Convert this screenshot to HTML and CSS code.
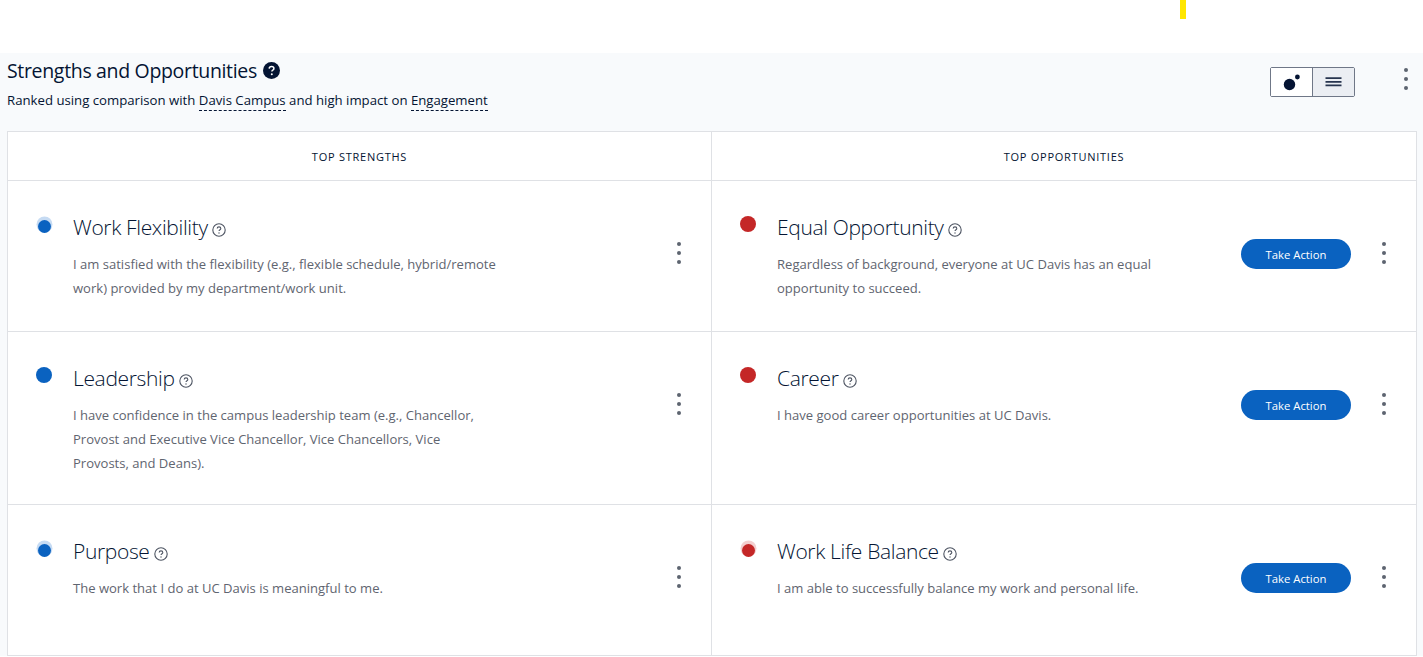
FILE: index.html
```html
<!DOCTYPE html>
<html lang="en">
<head>
<meta charset="utf-8">
<title>Strengths and Opportunities</title>
<link rel="stylesheet" href="styles.css">
</head>
<body>
<div class="marker"></div>
<main class="panel">
  <header class="panel-head">
    <div class="head-text">
      <h1 class="panel-title">Strengths and Opportunities
        <svg class="help-solid" viewBox="0 0 17 17" aria-hidden="true"><circle cx="8.5" cy="8.5" r="8.5" fill="#041433"/><path d="M6.2 6.6c.1-1.4 1-2.1 2.4-2.1s2.3.8 2.3 1.9c0 .9-.5 1.4-1.2 1.8-.6.4-.8.7-.8 1.4" fill="none" stroke="#fff" stroke-width="1.5"/><circle cx="8.8" cy="12.3" r="1" fill="#fff"/></svg>
      </h1>
      <p class="panel-sub">Ranked using comparison with <span class="dashed">Davis Campus</span> and high impact on <span class="dashed">Engagement</span></p>
    </div>
    <div class="toggle">
      <button class="toggle-btn"><svg width="22" height="22" viewBox="0 0 22 22" aria-hidden="true"><circle cx="8.5" cy="13.5" r="5.7" fill="#041433"/><circle cx="16.4" cy="6" r="2.4" fill="#041433"/></svg></button>
      <button class="toggle-btn is-on"><svg width="18" height="10" viewBox="0 0 18 10" aria-hidden="true"><path d="M0.5 1.2h16M0.5 4.8h16M0.5 8.4h16" stroke="#27344f" stroke-width="1.7"/></svg></button>
    </div>
    <button class="kebab kebab-head"><i></i><i></i><i></i></button>
  </header>

  <section class="board">
    <div class="col-head">TOP STRENGTHS</div>
    <div class="col-head">TOP OPPORTUNITIES</div>

    <article class="cell">
      <span class="dot blue halo"></span>
      <div class="cell-body">
        <h2 class="cell-title">Work Flexibility <svg class="help" viewBox="0 0 14 14" aria-hidden="true"><circle cx="7" cy="7" r="6.2"/><path d="M5.2 5.6c0-1.1.8-1.7 1.8-1.7s1.8.6 1.8 1.5c0 1.3-1.8 1.3-1.8 2.7"/><circle class="pt" cx="7" cy="10" r=".7"/></svg></h2>
        <p class="cell-text">I am satisfied with the flexibility (e.g., flexible schedule, hybrid/remote work) provided by my department/work unit.</p>
      </div>
      <button class="kebab"><i></i><i></i><i></i></button>
    </article>
    <article class="cell">
      <span class="dot red"></span>
      <div class="cell-body">
        <h2 class="cell-title">Equal Opportunity <svg class="help" viewBox="0 0 14 14" aria-hidden="true"><circle cx="7" cy="7" r="6.2"/><path d="M5.2 5.6c0-1.1.8-1.7 1.8-1.7s1.8.6 1.8 1.5c0 1.3-1.8 1.3-1.8 2.7"/><circle class="pt" cx="7" cy="10" r=".7"/></svg></h2>
        <p class="cell-text">Regardless of background, everyone at UC Davis has an equal opportunity to succeed.</p>
      </div>
      <button class="action">Take Action</button>
      <button class="kebab"><i></i><i></i><i></i></button>
    </article>

    <article class="cell tall">
      <span class="dot blue"></span>
      <div class="cell-body">
        <h2 class="cell-title">Leadership <svg class="help" viewBox="0 0 14 14" aria-hidden="true"><circle cx="7" cy="7" r="6.2"/><path d="M5.2 5.6c0-1.1.8-1.7 1.8-1.7s1.8.6 1.8 1.5c0 1.3-1.8 1.3-1.8 2.7"/><circle class="pt" cx="7" cy="10" r=".7"/></svg></h2>
        <p class="cell-text">I have confidence in the campus leadership team (e.g., Chancellor, Provost and Executive Vice Chancellor, Vice Chancellors, Vice Provosts, and Deans).</p>
      </div>
      <button class="kebab"><i></i><i></i><i></i></button>
    </article>
    <article class="cell tall">
      <span class="dot red"></span>
      <div class="cell-body">
        <h2 class="cell-title">Career <svg class="help" viewBox="0 0 14 14" aria-hidden="true"><circle cx="7" cy="7" r="6.2"/><path d="M5.2 5.6c0-1.1.8-1.7 1.8-1.7s1.8.6 1.8 1.5c0 1.3-1.8 1.3-1.8 2.7"/><circle class="pt" cx="7" cy="10" r=".7"/></svg></h2>
        <p class="cell-text">I have good career opportunities at UC Davis.</p>
      </div>
      <button class="action">Take Action</button>
      <button class="kebab"><i></i><i></i><i></i></button>
    </article>

    <article class="cell">
      <span class="dot blue halo"></span>
      <div class="cell-body">
        <h2 class="cell-title">Purpose <svg class="help" viewBox="0 0 14 14" aria-hidden="true"><circle cx="7" cy="7" r="6.2"/><path d="M5.2 5.6c0-1.1.8-1.7 1.8-1.7s1.8.6 1.8 1.5c0 1.3-1.8 1.3-1.8 2.7"/><circle class="pt" cx="7" cy="10" r=".7"/></svg></h2>
        <p class="cell-text">The work that I do at UC Davis is meaningful to me.</p>
      </div>
      <button class="kebab"><i></i><i></i><i></i></button>
    </article>
    <article class="cell">
      <span class="dot red halo"></span>
      <div class="cell-body">
        <h2 class="cell-title">Work Life Balance <svg class="help" viewBox="0 0 14 14" aria-hidden="true"><circle cx="7" cy="7" r="6.2"/><path d="M5.2 5.6c0-1.1.8-1.7 1.8-1.7s1.8.6 1.8 1.5c0 1.3-1.8 1.3-1.8 2.7"/><circle class="pt" cx="7" cy="10" r=".7"/></svg></h2>
        <p class="cell-text">I am able to successfully balance my work and personal life.</p>
      </div>
      <button class="action">Take Action</button>
      <button class="kebab"><i></i><i></i><i></i></button>
    </article>
  </section>
</main>
</body>
</html>
```

FILE: styles.css
```css
* { box-sizing: border-box; }
html, body { margin: 0; height: 657px; overflow: hidden; background: #fff; }
body {
  font-family: "Open Sans", "Noto Sans", "Liberation Sans", sans-serif;
  color: #041433;
  position: relative;
}
.marker {
  position: absolute;
  left: 1180px;
  top: 0;
  width: 6px;
  height: 19px;
  background: #ffe600;
}
.panel {
  margin-top: 53px;
  background: #f8fafc;
  padding: 0 6px 0 7px;
}
.panel-head {
  height: 78px;
  display: flex;
  align-items: flex-start;
}
.head-text { flex: 1; padding-top: 4px; }
.panel-title {
  margin: 0;
  font-size: 19.5px;
  line-height: 28px;
  font-weight: 400;
  display: flex;
  align-items: center;
  gap: 6px;
  letter-spacing: -0.33px;
}
.help-solid { width: 17px; height: 17px; margin-top: -2px; }
.panel-sub {
  margin: 5px 0 0;
  font-size: 13.2px;
  line-height: 20px;
  color: #041433;
}
.dashed { border-bottom: 1px dashed #041433; padding-bottom: 1px; }
.toggle {
  display: flex;
  margin-top: 14px;
  width: 85px;
  height: 30px;
  border: 1px solid #6f7787;
  border-radius: 2px;
  background: #fff;
  margin-right: 44px;
}
.toggle-btn {
  flex: 1;
  border: 0;
  padding: 0;
  background: #fff;
  display: flex;
  align-items: center;
  justify-content: center;
}
.toggle-btn.is-on { background: #ebeef3; border-left: 1px solid #6f7787; }
.kebab {
  border: 0;
  background: none;
  padding: 0;
  width: 14px;
  display: flex;
  flex-direction: column;
  align-items: center;
  gap: 5px;
}
.kebab i {
  width: 4px;
  height: 4px;
  border-radius: 50%;
  background: #5d6470;
}
.kebab-head { margin: 15px 4px 0 0; }
.board {
  display: grid;
  grid-template-columns: 704px 705px;
  grid-template-rows: 49px 151px 173px 151px;
  background: #fff;
  border-top: 1px solid #dfe1e5;
  border-left: 1px solid #dfe1e5;
}
.col-head {
  display: flex;
  align-items: center;
  justify-content: center;
  font-size: 11px;
  letter-spacing: 0.75px;
  font-weight: 400;
  border-right: 1px solid #dfe1e5;
  border-bottom: 1px solid #dfe1e5;
}
.cell {
  display: flex;
  align-items: flex-start;
  padding: 35px 25px 0 28px;
  border-right: 1px solid #dfe1e5;
  border-bottom: 1px solid #dfe1e5;
}
.dot {
  flex: none;
  width: 16px;
  height: 16px;
  border-radius: 50%;
}
.dot.blue { background: #0a62c0; }
.dot.red { background: #c42727; }
.dot.halo {
  width: 13px;
  height: 13px;
  margin: 3.5px 1.5px 0;
}
.dot.blue.halo { box-shadow: 0 -2px 0 1.5px #c6dbf3; }
.dot.red.halo { box-shadow: 0 -2px 0 1.5px #f3cfcf; }
.cell-body { flex: 1; margin-left: 21px; margin-top: -4px; }
.cell-title {
  margin: 0;
  font-size: 21px;
  line-height: 30px;
  font-weight: 300;
  letter-spacing: -0.35px;
  display: flex;
  align-items: center;
  gap: 4.5px;
}
.help {
  width: 14px;
  height: 14px;
  margin-top: 6px;
  fill: none;
  stroke: #4d5462;
  stroke-width: 1.1;
}
.help .pt { fill: #4d5462; stroke: none; }
.cell-text {
  margin: 10px 0 0;
  max-width: 425px;
  font-size: 13.05px;
  line-height: 24px;
  color: #5f6570;
}
.cell > .kebab { margin-top: 26px; margin-left: auto; }
.action {
  flex: none;
  width: 110px;
  height: 30px;
  margin: 23px 26px 0 0;
  border: 0;
  border-radius: 15px;
  background: #0a62c0;
  color: #fff;
  font-family: inherit;
  font-size: 11.3px;
}
```
